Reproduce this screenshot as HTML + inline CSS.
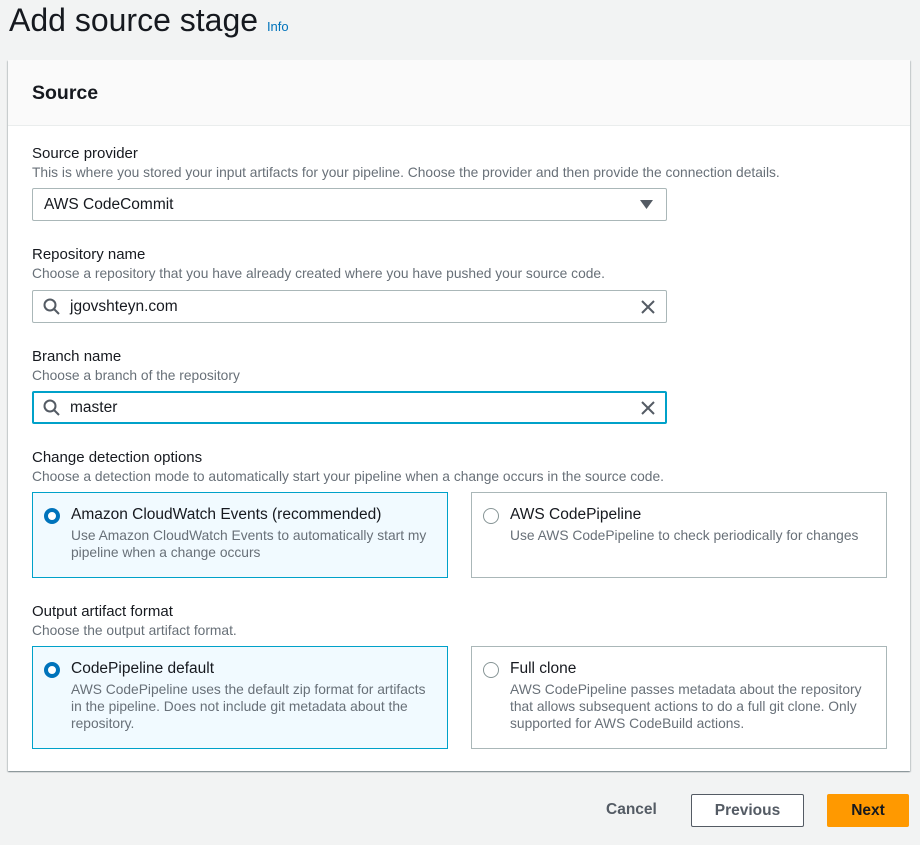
<!DOCTYPE html>
<html><head><style>
*{margin:0;padding:0;box-sizing:border-box}
body{width:920px;height:845px;background:#f2f3f3;font-family:"Liberation Sans",sans-serif;color:#16191f;position:relative;overflow:hidden}
.a{position:absolute;white-space:nowrap}
.lbl{font-size:15px;color:#16191f}
.desc{font-size:13.8px;color:#687078}
.inp{position:absolute;left:32px;width:635px;height:33px;border:1px solid #aab7b8;background:#fff;border-radius:2px;font-size:15.5px}
.card{position:absolute;width:416px;border:1px solid #aab7b8;background:#fff}
.card.sel{background:#f1faff;border-color:#00a1c9}
.rad{position:absolute;left:11px;top:15px;width:16px;height:16px;border-radius:50%;border:1px solid #879596;background:#fff}
.sel .rad{border:4.5px solid #0073bb}
.ct{position:absolute;left:38px;top:13px;font-size:15.5px}
.cd{position:absolute;left:38px;top:34px;font-size:13.8px;color:#687078;line-height:17px;white-space:normal;width:365px}
</style></head><body>
<div class="a" style="left:9px;top:2px;font-size:32px;color:#16191f">Add source stage <span style="font-size:13px;color:#0073bb">Info</span></div>
<div style="position:absolute;left:8px;top:60px;width:902px;height:711px;background:#fff;box-shadow:0 1px 1px rgba(0,28,36,.3),1px 1px 1px rgba(0,28,36,.15),-1px 1px 1px rgba(0,28,36,.15)"></div>
<div style="position:absolute;left:8px;top:60px;width:902px;height:66px;background:#fafafa;border-bottom:1px solid #eaeded"></div>
<div class="a" style="left:32px;top:82px;font-size:19.5px;font-weight:bold">Source</div>

<div class="a lbl" style="left:32px;top:145px">Source provider</div>
<div class="a desc" style="left:32px;top:165px">This is where you stored your input artifacts for your pipeline. Choose the provider and then provide the connection details.</div>
<div class="inp" style="top:188px"><span class="a" style="left:11px;top:7px">AWS CodeCommit</span><svg class="a" style="left:607px;top:11px" width="13" height="10"><path d="M0 0H13L6.5 9Z" fill="#545b64"/></svg></div>

<div class="a lbl" style="left:32px;top:246px">Repository name</div>
<div class="a desc" style="left:32px;top:266px">Choose a repository that you have already created where you have pushed your source code.</div>
<div class="inp" style="top:290px"><svg class="a" style="left:10px;top:7px" width="18" height="18"><circle cx="7" cy="7" r="5.5" fill="none" stroke="#545b64" stroke-width="2"/><path d="M11 11L16 16" stroke="#545b64" stroke-width="2"/></svg><span class="a" style="left:37px;top:7px">jgovshteyn.com</span><svg class="a" style="left:607px;top:8px" width="16" height="16"><path d="M2 2L14 14M14 2L2 14" stroke="#545b64" stroke-width="2"/></svg></div>

<div class="a lbl" style="left:32px;top:348px">Branch name</div>
<div class="a desc" style="left:32px;top:368px">Choose a branch of the repository</div>
<div class="inp" style="top:391px;border:2px solid #00a1c9"><svg class="a" style="left:9px;top:6px" width="18" height="18"><circle cx="7" cy="7" r="5.5" fill="none" stroke="#545b64" stroke-width="2"/><path d="M11 11L16 16" stroke="#545b64" stroke-width="2"/></svg><span class="a" style="left:36px;top:6px">master</span><svg class="a" style="left:606px;top:7px" width="16" height="16"><path d="M2 2L14 14M14 2L2 14" stroke="#545b64" stroke-width="2"/></svg></div>

<div class="a lbl" style="left:32px;top:449px">Change detection options</div>
<div class="a desc" style="left:32px;top:469px">Choose a detection mode to automatically start your pipeline when a change occurs in the source code.</div>
<div class="card sel" style="left:32px;top:492px;height:86px"><div class="rad"></div><div class="ct">Amazon CloudWatch Events (recommended)</div><div class="cd">Use Amazon CloudWatch Events to automatically start my pipeline when a change occurs</div></div>
<div class="card" style="left:471px;top:492px;height:86px"><div class="rad"></div><div class="ct">AWS CodePipeline</div><div class="cd">Use AWS CodePipeline to check periodically for changes</div></div>

<div class="a lbl" style="left:32px;top:603px">Output artifact format</div>
<div class="a desc" style="left:32px;top:623px">Choose the output artifact format.</div>
<div class="card sel" style="left:32px;top:646px;height:103px"><div class="rad"></div><div class="ct">CodePipeline default</div><div class="cd">AWS CodePipeline uses the default zip format for artifacts in the pipeline. Does not include git metadata about the repository.</div></div>
<div class="card" style="left:471px;top:646px;height:103px"><div class="rad"></div><div class="ct">Full clone</div><div class="cd">AWS CodePipeline passes metadata about the repository that allows subsequent actions to do a full git clone. Only supported for AWS CodeBuild actions.</div></div>

<div class="a" style="left:606px;top:801px;font-size:15.5px;font-weight:bold;color:#545b64">Cancel</div>
<div style="position:absolute;left:691px;top:794px;width:113px;height:33px;border:1px solid #545b64;background:#fff;border-radius:2px;font-size:15.5px;font-weight:bold;color:#545b64;text-align:center;line-height:31px">Previous</div>
<div style="position:absolute;left:827px;top:794px;width:82px;height:33px;background:#ff9900;border-radius:2px;font-size:15.5px;font-weight:bold;color:#16191f;text-align:center;line-height:33px">Next</div>
</body></html>
